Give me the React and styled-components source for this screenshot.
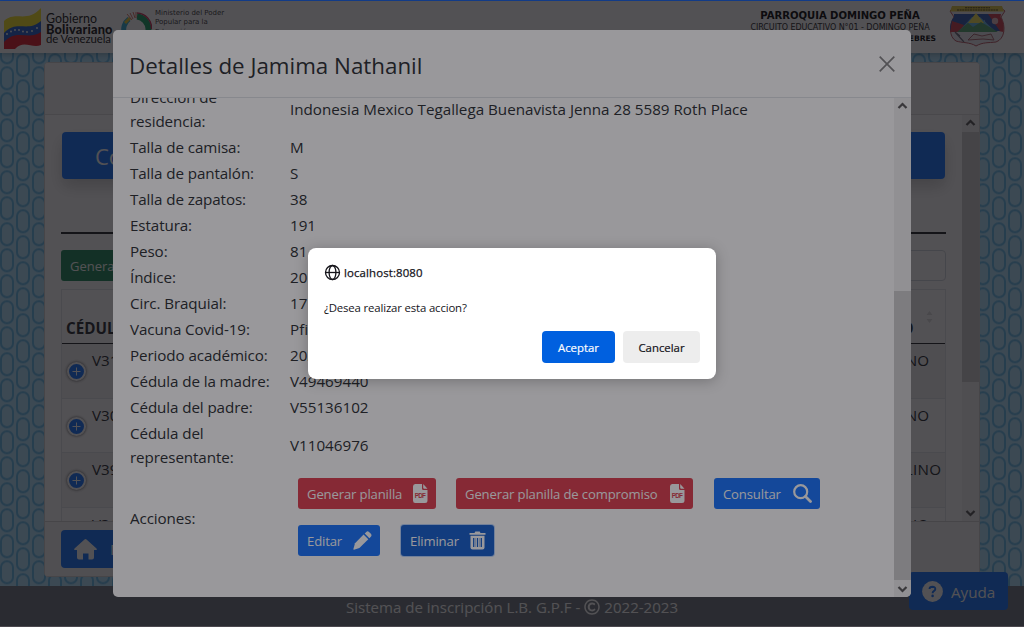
import React from 'react';
import styled, { createGlobalStyle, css } from 'styled-components';
import { FaRegCopyright } from 'react-icons/fa';

const GlobalStyle = createGlobalStyle`
  * { box-sizing: border-box; }
  body { margin: 0; overflow: hidden; font-family: 'Open Sans', 'Noto Sans', sans-serif; font-size: 15.2px; line-height: 24px; color: #212529; }
  button { font-family: inherit; border: 0; margin: 0; }
  svg { display: block; flex: none; }
`;

const Screen = styled.div`
  position: relative;
  width: 1024px;
  height: 627px;
  overflow: hidden;
  background: #fff;
  white-space: nowrap;
`;

const Page = styled.div`
  display: flex;
  flex-direction: column;
  height: 627px;
  border-top: 1px solid #0b5ce6;
`;

const Masthead = styled.header`
  display: flex;
  height: 52px;
  flex: none;
  background: #fff;
  box-shadow: 0 2px 6px rgba(0, 0, 0, 0.25);
  z-index: 1;
`;

const GovBrand = styled.div`
  display: flex;
  padding: 6px 0 0 4px;
  width: 121px;
`;

const GovName = styled.div`
  display: flex;
  flex-direction: column;
  margin: 7px 0 0 5px;
  font: 12.4px/10px Lato, sans-serif;
  color: #111;
  strong { font-weight: 900; font-size: 12.8px; letter-spacing: 0.15px; }
  span { font-size: 11.4px; letter-spacing: -0.1px; }
`;

const Ministry = styled.div`
  display: flex;
  flex: 1;
  padding-top: 8px;
  gap: 3px;
  font: 7px/9.3px 'DejaVu Sans', sans-serif;
  letter-spacing: 0;
  color: #333;
`;

const School = styled.div`
  display: flex;
  flex-direction: column;
  align-items: center;
  width: 200px;
  margin-right: 8px;
  padding-top: 9px;
  font: 8px/12px 'DejaVu Sans', sans-serif;
  letter-spacing: -0.07px;
  color: #222;
  b { font-size: 10.1px; color: #000; letter-spacing: -0.05px; }
  strong { align-self: flex-end; font-size: 7.6px; line-height: 9px; margin-right: 4px; color: #000; }
`;

const CrestSlot = styled.div`
  width: 76px;
  padding-top: 4px;
`;

const Backdrop = styled.main`
  position: relative;
  flex: 1;
  padding: 9px 0 0 44px;
  background: #ade1fb;
`;

const Pattern = styled.svg`
  position: absolute;
  inset: 0;
`;

const Card = styled.section`
  position: relative;
  width: 936px;
  height: 515px;
  display: flex;
  flex-direction: column;
  border: 1px solid #d3d3d3;
  border-radius: 4px;
  background: #fff;
  overflow: hidden;
`;

const CardTop = styled.div`
  height: 52px;
  flex: none;
  background: #f7f7f7;
  border-bottom: 1px solid #dadada;
`;

const CardBody = styled.div`
  display: flex;
  height: 406px;
  flex: none;
  overflow: hidden;
`;

const CardContent = styled.div`
  width: 917px;
  padding: 17px 16px 0;
`;

const CardFoot = styled.div`
  flex: 1;
  padding: 8px 16px;
  background: #f7f7f7;
  border-top: 1px solid #d3d3d3;
`;

const Banner = styled.div`
  height: 47px;
  margin: 0 1px;
  padding-left: 33px;
  border-radius: 4px;
  background: #0d6efd;
  color: #fff;
  font-size: 22px;
  line-height: 49px;
  box-shadow: 0 8px 16px rgba(0, 0, 0, 0.2);
`;

const Rule = styled.div`
  height: 2px;
  margin: 53px 0 16px;
  background: #1c1f23;
`;

const Tools = styled.div`
  display: flex;
  justify-content: space-between;
  height: 31px;
  margin-bottom: 8px;
`;

const ReportButton = styled.button`
  width: 130px;
  text-align: left;
  padding: 0 9px;
  border-radius: 3px;
  background: #198754;
  color: #fff;
  font-size: 13px;
`;

const SearchBox = styled.div`
  width: 180px;
  border: 1px solid #ced4da;
  border-radius: 4px;
`;

const List = styled.div`
  border: 1px solid #dee2e6;
`;

const ListHead = styled.div`
  display: flex;
  height: 54px;
  padding-left: 4px;
  border-bottom: 1px solid #1c1f23;
  font-weight: 700;
  line-height: 76px;
  > :first-child { width: 785px; }
`;

const ListRow = styled.div`
  display: flex;
  height: ${(p) => p.$h || 55}px;
  padding-left: 4px;
  border-bottom: 1px solid #dee2e6;
  background: ${(p) => (p.$striped ? '#f2f2f2' : '#fff')};
  line-height: 32px;
`;

const Expand = styled.span`
  width: 19px;
  height: 19px;
  margin: 18px 6px 0 1px;
  display: flex;
  flex: none;
  align-items: center;
  justify-content: center;
  border: 2px solid #fff;
  border-radius: 50%;
  background: #0d6efd;
  box-shadow: 0 0 3px #444;
`;

const IdCell = styled.span`
  width: 759px;
`;

const SexCell = styled.span`
  letter-spacing: ${(p) => (p.$wide ? 0.3 : 0.1)}px;
`;

const SortArrows = styled.span`
  display: flex;
  align-items: flex-end;
  padding: 0 0 19px 13px;
`;

const HomeButton = styled.div`
  display: flex;
  align-items: center;
  width: 180px;
  height: 38px;
  padding-left: 13px;
  gap: 13px;
  border-radius: 4px;
  background: #0d6efd;
  color: #fff;
`;

const PageFoot = styled.footer`
  height: 40px;
  flex: none;
  display: flex;
  justify-content: center;
  gap: 4px;
  padding-top: 9px;
  background: #6c757d;
  color: #fff;
  font-size: 15.05px;
  line-height: 24px;
  svg { margin-top: 4px; }
`;

const BottomEdge = styled.div`
  height: 1px;
  background: #e2dde8;
`;

const HelpButton = styled.div`
  position: absolute;
  left: 909px;
  top: 572px;
  z-index: 2;
  display: flex;
  align-items: center;
  width: 99px;
  height: 38px;
  padding: 1px 0 0 13px;
  gap: 8px;
  border-radius: 4px;
  background: #0d6efd;
  color: #fff;
`;

const Shade = styled.div`
  position: absolute;
  inset: ${(p) => p.$inset || '0'};
  z-index: ${(p) => p.$level};
  background: ${(p) => p.$color};
`;

const Modal = styled.div`
  position: absolute;
  left: 113px;
  top: 30px;
  z-index: 4;
  width: 798px;
  height: 567px;
  display: flex;
  flex-direction: column;
  border-radius: 5px;
  background: #fff;
  overflow: hidden;
`;

const ModalHead = styled.div`
  display: flex;
  justify-content: space-between;
  height: 68px;
  flex: none;
  padding: 17px 16px 0;
  border-bottom: 1px solid #dee2e6;
  font-size: 22.35px;
  line-height: 37px;
  svg { margin-top: 9px; }
`;

const ModalBody = styled.div`
  display: flex;
  flex: 1;
  min-height: 0;
  overflow: hidden;
`;

const Details = styled.div`
  flex: 1;
  padding-left: 17px;
  margin-top: -14px;
`;

const DetailRow = styled.div`
  display: grid;
  grid-template-columns: 160px 1fr;
  align-items: center;
  min-height: 26px;
  padding: 1px 0;
`;

const Label = styled.div`
  white-space: pre-line;
  letter-spacing: -0.1px;
`;

const Actions = styled.div`
  display: flex;
  flex-wrap: wrap;
  gap: 16px 0;
  padding: 7px 0 8px 8px;
`;

const tones = {
  danger: css`background: #dc3545;`,
  primary: css`background: #0d6efd;`,
  active: css`background: #0a58ca; box-shadow: 0 0 0 1px rgba(49, 132, 253, 0.35);`,
};

const ActionButton = styled.button`
  display: flex;
  align-items: center;
  justify-content: space-between;
  width: ${(p) => p.$w}px;
  height: 31px;
  margin-right: ${(p) => p.$gap || 0}px;
  padding: 0 8px 0 9px;
  border-radius: 3px;
  color: #fff;
  font-size: 13.1px;
  letter-spacing: -0.14px;
  ${(p) => tones[p.$tone]}
`;

const Track = styled.div`
  display: flex;
  flex-direction: column;
  justify-content: space-between;
  align-items: center;
  width: 17px;
  flex: none;
  padding: 4px 0;
  background: linear-gradient(#cdcdcd, #cdcdcd) 0 ${(p) => p.$top}px / 17px ${(p) => p.$size}px no-repeat #f0f0f0;
`;

const Dialog = styled.div`
  position: absolute;
  left: 308px;
  top: 248px;
  z-index: 6;
  width: 408px;
  height: 131px;
  padding: 16px;
  border-radius: 8px;
  background: #fff;
  box-shadow: 0 2px 14px rgba(0, 0, 0, 0.25);
  color: #15141a;
  font-size: 11.4px;
  line-height: 17px;
`;

const Origin = styled.div`
  display: flex;
  align-items: center;
  gap: 3px;
  letter-spacing: 0.13px;
  -webkit-text-stroke: 0.25px #15141a;
`;

const Question = styled.p`
  margin: 18px 0 15px;
  letter-spacing: -0.16px;
`;

const DialogActions = styled.div`
  display: flex;
  justify-content: flex-end;
  gap: 8px;
`;

const DialogButton = styled.button`
  width: ${(p) => (p.$main ? 73 : 77)}px;
  height: 32px;
  padding: 0;
  border-radius: 4px;
  background: ${(p) => (p.$main ? '#0060df' : '#ededed')};
  color: ${(p) => (p.$main ? '#fbfbfe' : '#15141a')};
  font-size: 11.4px;
  -webkit-text-stroke: 0.2px;
`;

const Chevron = ({ up }) => (
  <svg width="11" height="8" viewBox="0 0 11 8" fill="none" stroke="#505050" strokeWidth="2.2">
    <path d={up ? 'M1.5 6 5.5 2 9.5 6' : 'M1.5 2 5.5 6 9.5 2'} />
  </svg>
);

const Flag = () => (
  <svg width="37" height="43" viewBox="0 0 37 43">
    <path d="M0 14C12 3 22 17 37 1V16C24 27 14 13 0 27Z" fill="#f7e21b" />
    <path d="M0 26C13 12 23 26 37 14V27C24 36 14 22 0 36Z" fill="#1d58c8" />
    <path d="M0 35C13 21 24 34 37 25V38C28 42 20 32 11 42L0 42Z" fill="#de1522" />
    <g fill="#fff">
      {[[3, 27], [7, 24.5], [11, 23], [15, 23], [19, 24.5], [23, 25], [28, 24], [33, 21]].map(([x, y]) => (
        <circle key={x} cx={x} cy={y} r=".9" />
      ))}
    </g>
  </svg>
);

const MinistryMark = () => (
  <svg width="31" height="32" viewBox="0 0 31 32" fill="none">
    <path d="M3.500 25A13 13 0 0 1 8 10" stroke="#2aa7cf" strokeWidth="5" />
    <path d="M4 14l5-5" stroke="#e6c52b" strokeWidth="3" />
    <path d="M16 7.500A13 13 0 0 1 27.500 20V27" stroke="#139a5c" strokeWidth="6" />
    <path d="M16 4A15 15 0 0 1 30.500 20" stroke="#c92a50" strokeWidth="1.500" />
    <path d="M6 5l5 6M9 4l3 6M12 3l2 6M15 3v6" stroke="#d34c37" strokeWidth=".8" />
  </svg>
);

const Crest = () => (
  <svg width="58" height="43" viewBox="0 0 58 43">
    <path d="M6 2H52L57 6 53 12C58 21 57 34 48 37 40 38 35 37 28 41 22 37 14 38 8 36 1 32 1 20 6 12L2 6Z" fill="#e9e9ee" stroke="#b7505c" strokeWidth="1" />
    <path d="M6 9H36V26H2C2 20 3 15 6 12Z" fill="#2a54ac" />
    <path d="M36 9H53L52.500 12C56 17 56 22 55.500 27L40 24Z" fill="#cf3a46" />
    <path d="M4 16 16 20 13 27H2Z" fill="#cf3a46" />
    <path d="M33 9H40L52 26H42Z" fill="#2a54ac" />
    <path d="M11 26 24 12H32L47 26Z" fill="#5cb3e4" />
    <path d="M28 8 36 18H20Z" fill="#f2e14f" />
    <path d="M9 27 20 18 25 22 33 17 50 27Z" fill="#4ea06c" />
    <path d="M4 1H54L56 6.500H2Z" fill="#dcc640" />
    <path d="M17 2.800H42M9 5H50" stroke="#4e3c17" strokeWidth="1.100" strokeDasharray="2 .6" />
    <circle cx="47" cy="16" r="3.200" fill="#e3bbc0" />
    <path d="M7 27 16 37M7 27 12 31" stroke="#667" strokeWidth="1.200" fill="none" />
    <path d="M20 35 26 29 34 31 43 29 46 35 35 34Z" fill="#e8dddd" stroke="#a5636c" />
  </svg>
);

const PdfIcon = () => (
  <svg width="15" height="19" viewBox="0 0 15 19">
    <path d="M2.200 0H9V4.500Q9 6 10.500 6H14.500V16.500Q14.500 19 12 19H2.200Q0 19 0 16.500V2.500Q0 0 2.200 0Z" fill="#fff" />
    <path d="M10.200 0 14.500 4.800H11.200Q10.200 4.800 10.200 3.800Z" fill="#fff" />
    <text x="7.300" y="13.500" textAnchor="middle" fontFamily="Liberation Sans, sans-serif" fontWeight="700" fontSize="6.300" textLength="11" fill="#dc3545">PDF</text>
  </svg>
);

const SearchIcon = () => (
  <svg width="19" height="19" viewBox="0 0 19 19" fill="none" stroke="#fff">
    <circle cx="7.700" cy="7.700" r="6.500" strokeWidth="2.200" />
    <path d="M12.500 12.500 17.500 17.500" strokeWidth="2.800" strokeLinecap="round" />
  </svg>
);

const PencilIcon = () => (
  <svg width="19" height="19" viewBox="0 0 19 19" fill="#fff">
    <path d="M10.600 3.600 15.300 8.300 6.400 17.100 1 18.700Q.3 18.800 .4 18L2 12.200Z" />
    <path d="M11.700 2.500 13.300.9Q14.600-.2 16 .9L17.900 2.800Q19 4.200 18 5.600L16.400 7.200Z" />
  </svg>
);

const TrashIcon = () => (
  <svg width="17" height="19" viewBox="0 0 17 19">
    <path d="M.5 2H5.500L6.300.5H10.700L11.500 2H16.500V3.700H.5Z" fill="#fff" />
    <path d="M1.500 4.800H15.500V16.500Q15.500 18.500 13.500 18.500H3.500Q1.500 18.500 1.500 16.500Z" fill="#fff" />
    <path d="M4.700 7V16M8.500 7V16M12.300 7V16" stroke="#0a58ca" strokeWidth="1.300" />
    <path d="M6.500 7V16M10.500 7V16" stroke="#7fa6df" strokeWidth=".6" />
  </svg>
);

const HomeIcon = () => (
  <svg width="23" height="21" viewBox="0 0 23 21">
    <path d="M10.500.4Q11.500-.3 12.500.4L22.500 9.500Q23.400 11 21.800 11H20V18.500Q20 20.500 18 20.500H14.500V14.500H9V20.500H5Q3 20.500 3 18.500V11H1.200Q-.4 11 .5 9.500Z" fill="#fff" />
  </svg>
);

const HelpIcon = () => (
  <svg width="21" height="21" viewBox="0 0 21 21">
    <circle cx="10.500" cy="10.500" r="10.400" fill="#fff" />
    <path d="M7.500 8Q7.600 5.700 10.500 5.700 13.400 5.800 13.300 8.100 13.200 9.300 11.800 10.100 10.600 10.800 10.600 12.200" fill="none" stroke="#0d6efd" strokeWidth="1.900" />
    <circle cx="10.600" cy="14.900" r="1.300" fill="#0d6efd" />
  </svg>
);

const GlobeIcon = () => (
  <svg width="17" height="17" viewBox="0 0 17 17" fill="none" stroke="#15141a" strokeWidth="1.300">
    <circle cx="8.500" cy="8.500" r="7" />
    <ellipse cx="8.500" cy="8.500" rx="3.400" ry="7" />
    <path d="M1.500 8.500H15.500" />
  </svg>
);

const details = [
  ['Dirección de\nresidencia:', 'Indonesia Mexico Tegallega Buenavista Jenna 28 5589 Roth Place'],
  ['Talla de camisa:', 'M'],
  ['Talla de pantalón:', 'S'],
  ['Talla de zapatos:', '38'],
  ['Estatura:', '191'],
  ['Peso:', '81'],
  ['Índice:', '20'],
  ['Circ. Braquial:', '17'],
  ['Vacuna Covid-19:', 'Pfizer'],
  ['Periodo académico:', '2022-2023'],
  ['Cédula de la madre:', 'V49469440'],
  ['Cédula del padre:', 'V55136102'],
  ['Cédula del\nrepresentante:', 'V11046976'],
];

const students = [
  ['V31', 'FEMENINO'],
  ['V30', 'FEMENINO'],
  ['V39', 'MASCULINO'],
  ['V31', 'FEMENINO'],
];

export default function App() {
  return (
    <Screen>
      <GlobalStyle />
      <Page>
        <Masthead>
          <GovBrand>
            <Flag />
            <GovName>Gobierno<strong>Bolivariano</strong><span>de Venezuela</span></GovName>
          </GovBrand>
          <Ministry>
            <MinistryMark />
            <div>Ministerio del Poder<br />Popular para la<br />Educación</div>
          </Ministry>
          <School>
            <b>PARROQUIA DOMINGO PEÑA</b>
            <span>CIRCUITO EDUCATIVO N°01 - DOMINGO PEÑA</span>
            <strong>FEBRES</strong>
          </School>
          <CrestSlot><Crest /></CrestSlot>
        </Masthead>
        <Backdrop>
          <Pattern width="1024" height="533">
            <defs>
              <pattern id="pills" x="0" y="13.300" width="32" height="26" patternUnits="userSpaceOnUse">
                <g fill="none" stroke="#5fb6e6" strokeWidth="2">
                  <rect x="1" y="1" width="12" height="22" rx="6" />
                  <rect x="17" y="-12" width="12" height="22" rx="6" />
                  <rect x="17" y="14" width="12" height="22" rx="6" />
                </g>
              </pattern>
            </defs>
            <rect width="1024" height="533" fill="url(#pills)" />
          </Pattern>
          <Card>
            <CardTop />
            <CardBody>
              <CardContent>
                <Banner>Consultar</Banner>
                <Rule />
                <Tools>
                  <ReportButton>Generar</ReportButton>
                  <SearchBox />
                </Tools>
                <List>
                  <ListHead>
                    <span>CÉDULA</span>
                    <span>GÉNERO</span>
                    <SortArrows>
                      <svg width="7" height="14" viewBox="0 0 7 14" fill="#dcdcdc"><path d="M.5 5 3.500 1 6.500 5ZM.5 9 3.500 13 6.500 9Z" /></svg>
                    </SortArrows>
                  </ListHead>
                  {students.map(([id, sex], i) => (
                    <ListRow key={i} $striped={i % 2 === 0} $h={i === 1 ? 54 : 55}>
                      <Expand>
                        <svg width="9" height="9" viewBox="0 0 9 9" stroke="#fff"><path d="M4.500.5V8.500M.5 4.500H8.500" /></svg>
                      </Expand>
                      <IdCell>{id}</IdCell>
                      <SexCell $wide={sex.length > 8}>{sex}</SexCell>
                    </ListRow>
                  ))}
                </List>
              </CardContent>
              <Track $top={17} $size={250}><Chevron up /><Chevron /></Track>
            </CardBody>
            <CardFoot>
              <HomeButton><HomeIcon />Menú</HomeButton>
            </CardFoot>
          </Card>
        </Backdrop>
        <PageFoot>
          <span>Sistema de inscripción L.B. G.P.F -</span>
          <FaRegCopyright size={16} />
          <span>2022-2023</span>
        </PageFoot>
        <BottomEdge />
      </Page>
      <HelpButton><HelpIcon />Ayuda</HelpButton>
      <Shade $color="rgba(0, 0, 0, 0.5)" $inset="1px 0 0 0" $level={3} />
      <Modal>
        <ModalHead>
          <span>Detalles de Jamima Nathanil</span>
          <svg width="16" height="16" viewBox="0 0 16 16" stroke="#7f7f7f" strokeWidth="1.700">
            <path d="M.7.7 15.300 15.300M15.300.7.7 15.300" />
          </svg>
        </ModalHead>
        <ModalBody>
          <Details>
            {details.map(([label, value]) => (
              <DetailRow key={label}>
                <Label>{label}</Label>
                <div>{value}</div>
              </DetailRow>
            ))}
            <DetailRow>
              <Label>Acciones:</Label>
              <Actions>
                <ActionButton $tone="danger" $w={138} $gap={20}>Generar planilla<PdfIcon /></ActionButton>
                <ActionButton $tone="danger" $w={237} $gap={21}>Generar planilla de compromiso<PdfIcon /></ActionButton>
                <ActionButton $tone="primary" $w={106}>Consultar<SearchIcon /></ActionButton>
                <ActionButton $tone="primary" $w={82} $gap={21}>Editar<PencilIcon /></ActionButton>
                <ActionButton $tone="active" $w={93}>Eliminar<TrashIcon /></ActionButton>
              </Actions>
            </DetailRow>
          </Details>
          <Track $top={193} $size={289}><Chevron up /><Chevron /></Track>
        </ModalBody>
      </Modal>
      <Shade $color="rgba(28, 27, 34, 0.45)" $level={5} />
      <Dialog>
        <Origin><GlobeIcon />localhost:8080</Origin>
        <Question>¿Desea realizar esta accion?</Question>
        <DialogActions>
          <DialogButton $main>Aceptar</DialogButton>
          <DialogButton>Cancelar</DialogButton>
        </DialogActions>
      </Dialog>
    </Screen>
  );
}
